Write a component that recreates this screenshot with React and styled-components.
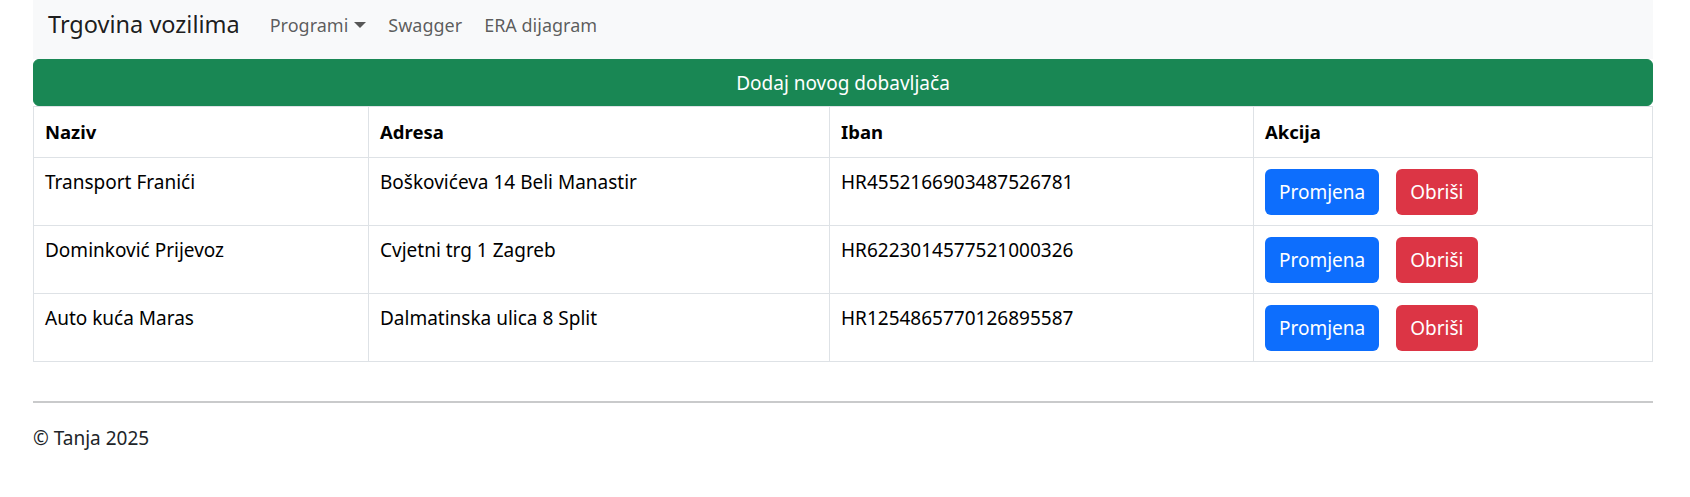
import React from "react";
import styled, { createGlobalStyle } from "styled-components";

const GlobalStyle = createGlobalStyle`
  * { box-sizing: border-box; }
  body {
    margin: 0;
    background: #fff;
    color: #212529;
    font-family: "Noto Sans", "Open Sans", sans-serif;
    font-size: 19px;
    line-height: 1.5;
  }
`;

const suppliers = [
  { naziv: "Transport Franići", adresa: "Boškovićeva 14 Beli Manastir", iban: "HR4552166903487526781" },
  { naziv: "Dominković Prijevoz", adresa: "Cvjetni trg 1 Zagreb", iban: "HR6223014577521000326" },
  { naziv: "Auto kuća Maras", adresa: "Dalmatinska ulica 8 Split", iban: "HR1254865770126895587" },
];

export default function App() {
  return (
    <>
      <GlobalStyle />
      <Page>
        <Navbar>
          <Brand>Trgovina vozilima</Brand>
          <NavLink>
            Programi <Caret />
          </NavLink>
          <NavLink>Swagger</NavLink>
          <NavLink>ERA dijagram</NavLink>
        </Navbar>

        <AddButton>Dodaj novog dobavljača</AddButton>

        <Table>
          <colgroup>
            <col style={{ width: 335 }} />
            <col style={{ width: 461 }} />
            <col style={{ width: 424 }} />
            <col />
          </colgroup>
          <thead>
            <tr>
              <Th>Naziv</Th>
              <Th>Adresa</Th>
              <Th>Iban</Th>
              <Th>Akcija</Th>
            </tr>
          </thead>
          <tbody>
            {suppliers.map((s) => (
              <tr key={s.iban}>
                <Td>{s.naziv}</Td>
                <Td>{s.adresa}</Td>
                <Td>{s.iban}</Td>
                <Td>
                  <Actions>
                    <ActionButton $variant="primary">Promjena</ActionButton>
                    <ActionButton $variant="danger">Obriši</ActionButton>
                  </Actions>
                </Td>
              </tr>
            ))}
          </tbody>
        </Table>

        <Rule />
        <Footer>© Tanja 2025</Footer>
      </Page>
    </>
  );
}

const Page = styled.div`
  width: 1620px;
  margin-left: 33px;
`;

const Navbar = styled.nav`
  display: flex;
  align-items: center;
  height: 59px;
  padding: 0 15px 9px;
  background: #f8f9fa;
`;

const Brand = styled.a`
  font-size: 23.5px;
  color: rgba(0, 0, 0, 0.9);
  margin-right: 30px;
  cursor: pointer;
`;

const NavLink = styled.a`
  display: flex;
  align-items: center;
  font-size: 18px;
  color: rgba(0, 0, 0, 0.65);
  margin-right: 22px;
  cursor: pointer;
`;

const Caret = styled.span`
  display: inline-block;
  margin-left: 6px;
  border-top: 6px solid rgba(0, 0, 0, 0.65);
  border-left: 6px solid transparent;
  border-right: 6px solid transparent;
`;

const AddButton = styled.button`
  display: block;
  width: 100%;
  height: 47px;
  border: 1px solid #198754;
  border-radius: 6px;
  background: #198754;
  color: #fff;
  font-family: inherit;
  font-size: 19px;
  cursor: pointer;
`;

const Table = styled.table`
  width: 100%;
  border-collapse: collapse;
  table-layout: fixed;
`;

const Th = styled.th`
  text-align: left;
  font-weight: 700;
  font-size: 18.5px;
  color: #000;
  padding: 12px 11px;
  line-height: 26px;
  border: 1px solid #dee2e6;
`;

const Td = styled.td`
  vertical-align: top;
  padding: 11px 11px 10px;
  line-height: 26px;
  color: #000;
  border: 1px solid #dee2e6;
`;

const Actions = styled.div`
  display: flex;
  gap: 17px;
`;

const ActionButton = styled.button`
  height: 46px;
  padding: 0 14px;
  border: none;
  border-radius: 6px;
  font-family: inherit;
  font-size: 19px;
  color: #fff;
  background: ${(p) => (p.$variant === "danger" ? "#dc3545" : "#0d6efd")};
  cursor: pointer;
`;

const Rule = styled.hr`
  margin: 39px 0 0;
  border: 0;
  border-top: 2px solid #c9cacb;
`;

const Footer = styled.footer`
  padding-top: 21px;
  color: #212529;
`;
